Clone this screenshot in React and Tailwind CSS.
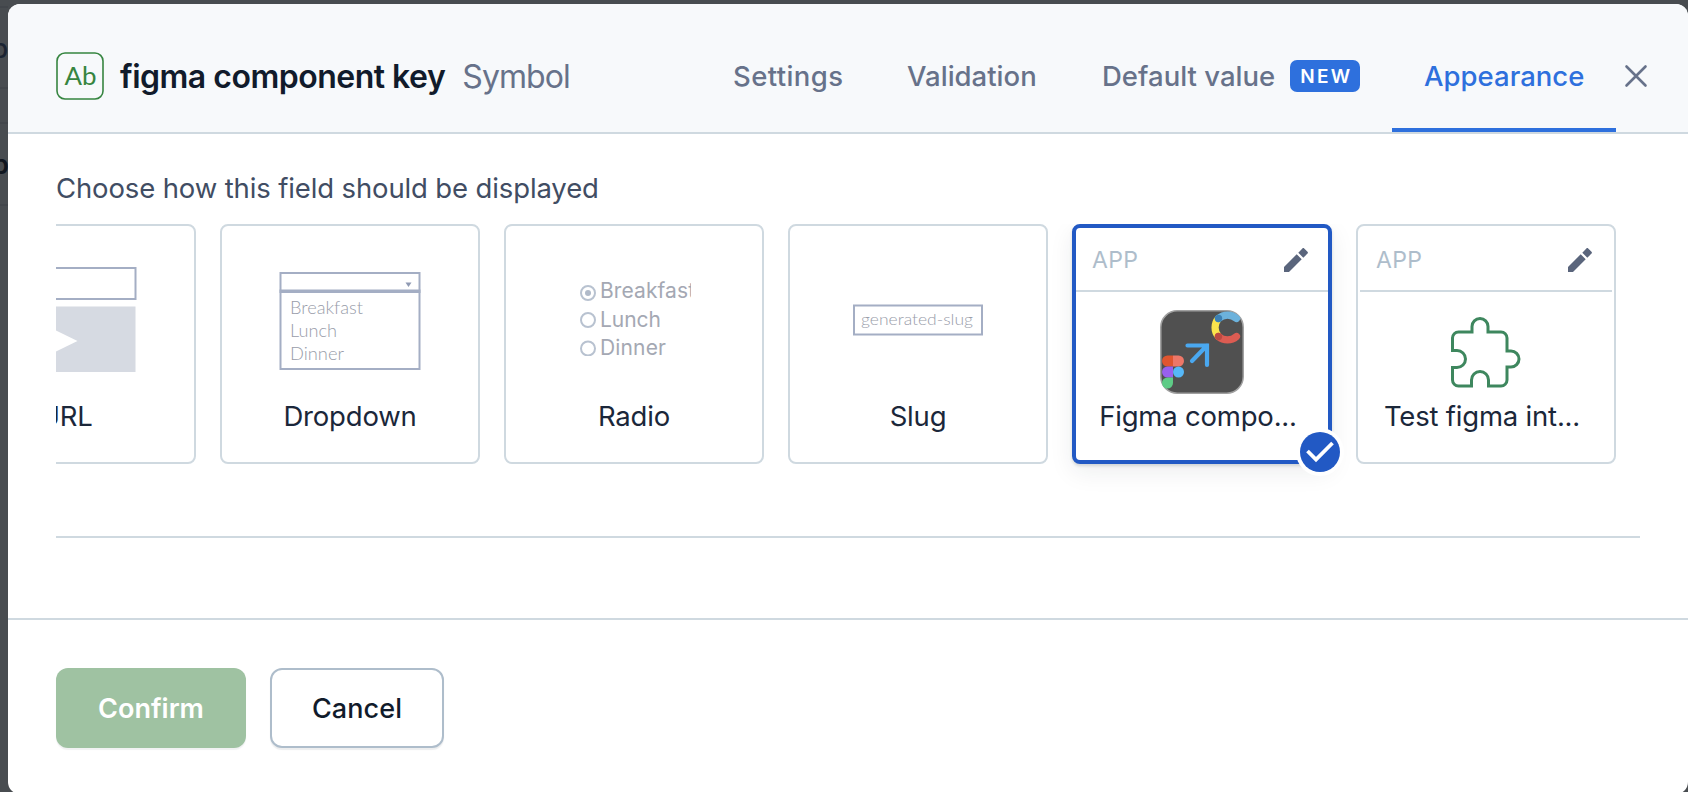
const Pencil = () => (
  <svg className="mt-[1px] size-[24px]" viewBox="0 0 24 24" fill="#5a657c">
    <path d="M0 19v5h5L17.700 11.300l-5-5zM14.300 4.700l5 5 4.200-4.100c.6-.6.6-1.200 0-1.800L20.200.5c-.6-.6-1.200-.6-1.800 0z" />
  </svg>
);

function Tab({ children, className = "", color = "text-[#67728a]" }) {
  return <div className={`flex h-[128px] items-center text-[27.500px] leading-8 font-medium tracking-[0.02px] whitespace-nowrap ${color} ${className}`}>{children}</div>;
}

function Card({ children, label, artClass = "pt-[14px]" }) {
  return (
    <div className="flex h-[240px] w-[260px] shrink-0 flex-col items-center rounded-[8px] border-2 border-[#cfd9e0] bg-white">
      <div className={`flex h-[174px] w-full shrink-0 items-center justify-center ${artClass}`}>{children}</div>
      <div className="text-[27.500px] leading-8 tracking-[-0.2px] whitespace-nowrap text-[#1b273a]">{label}</div>
    </div>
  );
}

function AppCard({ children, label, selected }) {
  return (
    <div className={`relative flex h-[240px] w-[260px] shrink-0 flex-col items-center rounded-[8px] bg-white ${selected ? "border-4 border-[#2259c4] shadow-[0_2px_3px_rgba(25,37,50,0.15),0_8px_24px_rgba(25,37,50,0.08)]" : "border-2 border-[#cfd9e0] p-[2px]"}`}>
      <div className="flex h-[64px] w-full shrink-0 items-center justify-between border-b-2 border-[#cfd9e0] pr-[20px] pl-[16px]">
        <span className="pt-[2px] text-[23px] tracking-[0.3px] text-[#aebdcb]">APP</span>
        <Pencil />
      </div>
      <div className="flex h-[108px] w-full shrink-0 items-start justify-center">{children}</div>
      <div className="-ml-[8px] text-[27.500px] leading-8 tracking-[-0.2px] whitespace-nowrap text-[#1b273a]">{label}</div>
      {selected && (
        <svg className="absolute -right-[16px] -bottom-[16px] size-[48px]" viewBox="0 0 48 48">
          <circle cx="24" cy="24" r="24" fill="#fff" />
          <circle cx="24" cy="24" r="20" fill="#2259c4" />
          <path d="M11.500 23L20 31.500 36.500 15" fill="none" stroke="#fff" strokeWidth="3.800" />
        </svg>
      )}
    </div>
  );
}

const FigmaIcon = () => (
  <svg className="mt-[18px] size-[84px]" viewBox="0 0 84 84">
    <rect x="0.800" y="0.800" width="82.400" height="82.400" rx="16.500" fill="#505050" stroke="#a0a0a0" strokeWidth="1.500" />
    <g fill="none" strokeWidth="7.200" strokeLinecap="round">
      <path d="M58.500 8.500A13.500 13.500 0 0 0 58.500 26.500" stroke="#fbe44c" />
      <path d="M58.500 8.500A13.500 13.500 0 0 1 76.500 8.500" stroke="#6cb2dc" />
      <path d="M58.500 26.500A13.500 13.500 0 0 0 76.500 26.500" stroke="#dc5c52" />
    </g>
    <circle cx="58.500" cy="8.500" r="3.700" fill="#3b80b4" />
    <circle cx="58.500" cy="26.500" r="3.700" fill="#bb4a42" />
    <path d="M27.500 35.500H47V55M47 35.500L32 51" fill="none" stroke="#4aa8f0" strokeWidth="4.200" strokeLinecap="round" />
    <path d="M13 45.500H7.500a5.500 5.500 0 0 0 0 11H13z" fill="#e0552f" />
    <path d="M13 45.500h5.500a5.500 5.500 0 0 1 0 11H13z" fill="#ed7768" />
    <path d="M13 56.500H7.500a5.500 5.500 0 0 0 0 11H13z" fill="#9860ee" />
    <circle cx="18.500" cy="62" r="5.500" fill="#56b8f8" />
    <path d="M13 67.500H7.500a5.500 5.500 0 1 0 5.500 5.500z" fill="#5ecb86" />
  </svg>
);

export default function App() {
  return (
    <div className="relative flex h-[792px] w-[1688px] overflow-hidden bg-[#484c50] pt-[4px] pl-[8px] font-['Inter',sans-serif]">
      <div className="absolute top-[6px] left-0 h-[83px] w-[8px] border-y-2 border-[#42464b]" />
      <div className="absolute top-[122px] left-0 h-[84px] w-[8px] border-y-2 border-[#42464b]" />
      <div className="absolute top-[29px] left-[-8px] text-[26px] font-medium text-[#1b2433]">p</div>
      <div className="absolute top-[145px] left-[-8px] text-[27px] font-semibold text-[#10161f]">p</div>
      <div className="relative flex h-[790px] w-[1680px] shrink-0 flex-col overflow-hidden rounded-[12px] bg-white">
        <header className="flex h-[130px] shrink-0 border-b-2 border-[#cfd9e0] bg-[#f7f9fb]">
          <div className="flex w-[694px] items-center pt-[16px] pl-[48px]">
            <svg className="size-[48px] shrink-0" viewBox="0 0 48 48">
              <rect x="1" y="1" width="46" height="46" rx="8" fill="none" stroke="#368540" strokeWidth="1.600" />
              <text x="8.500" y="33" fontSize="25" textLength="32" lengthAdjust="spacingAndGlyphs" fill="#368540" fontFamily="Lato, sans-serif">Ab</text>
            </svg>
            <div className="ml-[16px] pt-[2px] text-[32px] leading-10 font-semibold tracking-[-0.5px] whitespace-nowrap text-[#111b2b]">figma component key</div>
            <div className="ml-[17px] pt-[2px] text-[32px] leading-10 tracking-[-0.9px] text-[#67728a]">Symbol</div>
          </div>
          <nav className="flex pt-[8px]">
            <Tab className="w-[174px] pl-[31px]"><span className="tracking-[0.4px]">Settings</span></Tab>
            <Tab className="w-[194px] pl-[31px]">Validation</Tab>
            <Tab className="w-[322px] pl-[32px]">
              <span>Default value</span>
              <span className="ml-[15px] flex h-[32px] w-[70px] items-center justify-center rounded-[7px] bg-[#2e70dd] pt-[1px] pl-[2px] text-[19px] font-semibold tracking-[2.2px] text-white">NEW</span>
            </Tab>
            <div className="-mt-[8px] h-[128px] w-[224px] border-b-4 border-[#2e70dd] pt-[8px] pl-[32px]">
              <Tab color="text-[#2e70dd]">Appearance</Tab>
            </div>
          </nav>
          <svg className="mt-[60px] ml-[8px] size-[24px]" viewBox="0 0 24 24">
            <path d="M2.500 2.500L21.500 21.500M21.500 2.500L2.500 21.500" stroke="#67728a" strokeWidth="2.600" strokeLinecap="round" />
          </svg>
        </header>
        <main className="flex h-[486px] shrink-0 flex-col border-b-2 border-[#cfd9e0] pl-[48px]">
          <p className="mt-[38px] text-[27.500px] leading-8 tracking-[-0.13px] whitespace-nowrap text-[#414d63]">Choose how this field should be displayed</p>
          <div className="mt-[20px] flex h-[312px] w-[1584px] shrink-0 gap-[24px] overflow-hidden">
            <div className="-ml-[120px] shrink-0">
              <Card label="URL" artClass="pt-[12px]">
                <svg className="h-[108px] w-[142px]" viewBox="0 0 142 108">
                  <rect x="1" y="3" width="139.500" height="31" fill="#fff" stroke="#a4aec4" strokeWidth="2" />
                  <rect y="41.500" width="140.500" height="65.500" fill="#d6dae2" />
                  <path d="M60 65v22l22.500-11z" fill="#fff" />
                </svg>
              </Card>
            </div>
            <Card label="Dropdown" artClass="pt-[15px]">
              <svg className="h-[100px] w-[142px]" viewBox="0 0 142 100">
                <g fill="none" stroke="#a4aec4" strokeWidth="2"><rect x="1.500" y="2" width="139" height="19" /><rect x="1.500" y="19.500" width="139" height="78.500" /></g>
                <path d="M126.500 11.500h6l-3 4.500z" fill="#8f9ab3" />
                <g fill="#989ca9" fontFamily="Lato, sans-serif" fontWeight="300" fontSize="17"><text x="11" y="43" textLength="73" lengthAdjust="spacingAndGlyphs">Breakfast</text><text x="11" y="66" textLength="47" lengthAdjust="spacingAndGlyphs">Lunch</text><text x="11" y="89" textLength="54" lengthAdjust="spacingAndGlyphs">Dinner</text></g>
              </svg>
            </Card>
            <Card label="Radio" artClass="pb-[7px]">
              <svg className="ml-[2px] h-[92px] w-[111px]" viewBox="0 0 111 92">
                <g fill="none" stroke="#b8c2d0" strokeWidth="2"><circle cx="8" cy="29" r="7" /><circle cx="8" cy="56" r="7" /><circle cx="8" cy="84.500" r="7" /></g>
                <circle cx="8" cy="29" r="3" fill="#b0bac9" />
                <g fill="#a4a8b3" fontSize="21"><text x="20" y="34" textLength="95">Breakfast</text><text x="20" y="63" textLength="61">Lunch</text><text x="20" y="91" textLength="66">Dinner</text></g>
              </svg>
            </Card>
            <Card label="Slug">
              <svg className="h-[32px] w-[130px]" viewBox="0 0 130 32">
                <rect x="1" y="1.500" width="128" height="29" fill="none" stroke="#a4aec4" strokeWidth="2" />
                <text x="8" y="20.500" textLength="112" lengthAdjust="spacingAndGlyphs" fontSize="16" fontWeight="300" fill="#989ca9" fontFamily="Lato, sans-serif">generated-slug</text>
              </svg>
            </Card>
            <AppCard label="Figma compo..." selected><FigmaIcon /></AppCard>
            <AppCard label="Test figma int...">
              <svg className="mt-[24px] size-[72px]" viewBox="0 0 72 72" fill="none" stroke="#3e875e" strokeWidth="3">
                <path d="M2.500 34.500V22a6 6 0 0 1 6-6H22V10.500a8 8 0 0 1 16 0V16H51a6 6 0 0 1 6 6v13h4a8 8 0 0 1 0 16h-4v13a6 6 0 0 1-6 6H38.500v-6a8.500 8.500 0 0 0-17 0v6H8.500a6 6 0 0 1-6-6V51.500H7a8.500 8.500 0 0 0 0-17z" />
              </svg>
            </AppCard>
          </div>
          <div className="h-[2px] w-[1584px] shrink-0 bg-[#cfd9e0]" />
        </main>
        <footer className="flex gap-[24px] pt-[48px] pl-[48px] text-[27px] font-medium">
          <button className="h-[80px] w-[190px] rounded-[12px] bg-[#9fc2a2] pt-[2px] font-semibold text-white shadow-[0_2px_1px_rgba(25,37,50,0.06)]">Confirm</button>
          <button className="h-[80px] w-[174px] rounded-[12px] border-2 border-[#aebdcb] bg-white pt-[2px] tracking-[0.1px] text-[#111b2b] shadow-[0_2px_1px_rgba(25,37,50,0.08)]">Cancel</button>
        </footer>
      </div>
    </div>
  );
}
